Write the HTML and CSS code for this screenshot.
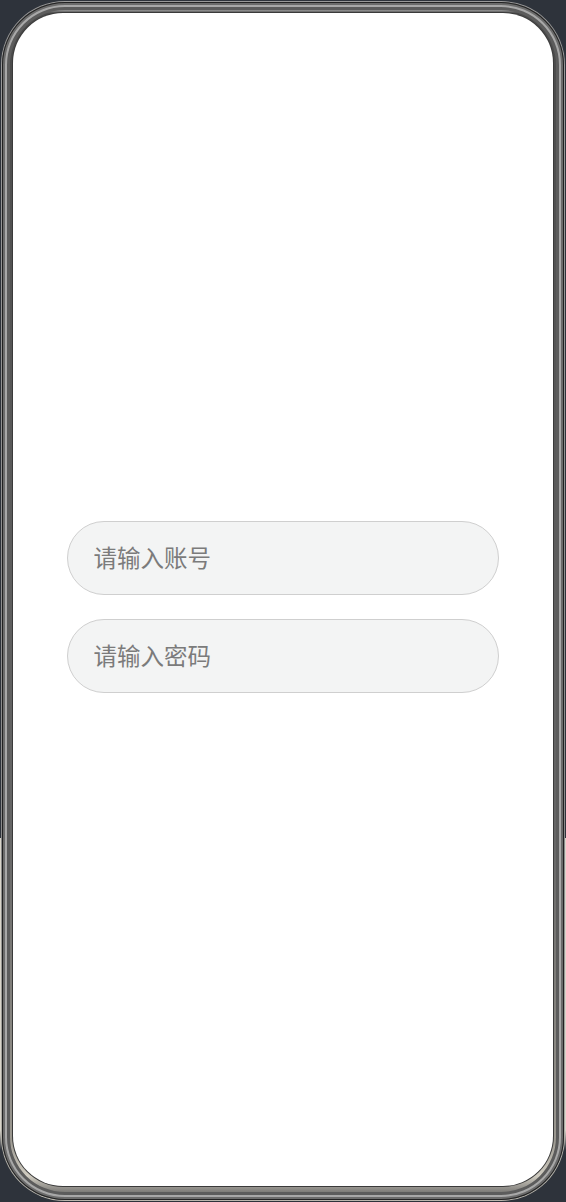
FILE: index.html
```html
<!DOCTYPE html>
<html lang="zh-CN">
<head>
<meta charset="utf-8">
<title>登录</title>
<link rel="stylesheet" href="styles.css">
</head>
<body>
<div class="phone">
  <div class="bezel">
    <div class="screen">
      <form class="login">
        <input class="field" type="text" placeholder="请输入账号">
        <input class="field" type="password" placeholder="请输入密码">
      </form>
    </div>
  </div>
</div>
</body>
</html>
```
FILE: styles.css
```css
html, body {
  margin: 0;
  padding: 0;
}
body {
  width: 566px;
  height: 1202px;
  background: linear-gradient(to bottom, #2e333b 0, #2e333b 838px, #d9d5ca 838px, #d9d5ca 1130px, #2e333b 1150px);
  font-family: "Noto Sans CJK SC", "Noto Sans", sans-serif;
  overflow: hidden;
}
.phone {
  box-sizing: border-box;
  margin: 1px 1px 0 1px;
  height: 1200px;
  border-radius: 64px;
  padding: 1px;
  background: linear-gradient(to bottom, #9a9a9a, #8a8a8a 70%, #b9b6ad);
}
.bezel {
  box-sizing: border-box;
  height: 100%;
  border-radius: 63px;
  padding: 11px 11px 14px 11px;
  background: linear-gradient(to bottom, #2a2a2a 0, #7d7d7d 4px, #b0b0b0 7px, #4a4a4a 11px, #5a5a5a 40%, #666 70%, #9b9890 95%, #cfcbc0 98%, #555 100%);
  box-shadow: inset 0 0 0 1px #222, inset 0 0 0 3px #6b6b6b, inset 0 0 0 5px #a8a8a8, inset 0 0 0 8px #5c5c5c;
}
.screen {
  box-sizing: border-box;
  height: 100%;
  background: #ffffff;
  border-radius: 50px;
  padding-top: 508px;
  box-shadow: 0 0 0 1px #3a3a3a;
}
.login {
  display: flex;
  flex-direction: column;
  align-items: center;
  gap: 24px;
  margin: 0;
}
.field {
  box-sizing: border-box;
  width: 432px;
  height: 74px;
  margin-left: -1px;
  border: 1px solid #cfcfcf;
  border-radius: 37px;
  background: #f3f4f4;
  padding: 0 0 3px 26px;
  font-family: "Noto Sans CJK SC", "Noto Sans", sans-serif;
  font-size: 23.5px;
  color: #333;
  outline: none;
}
.field::placeholder {
  color: #7b7b7b;
}
```
